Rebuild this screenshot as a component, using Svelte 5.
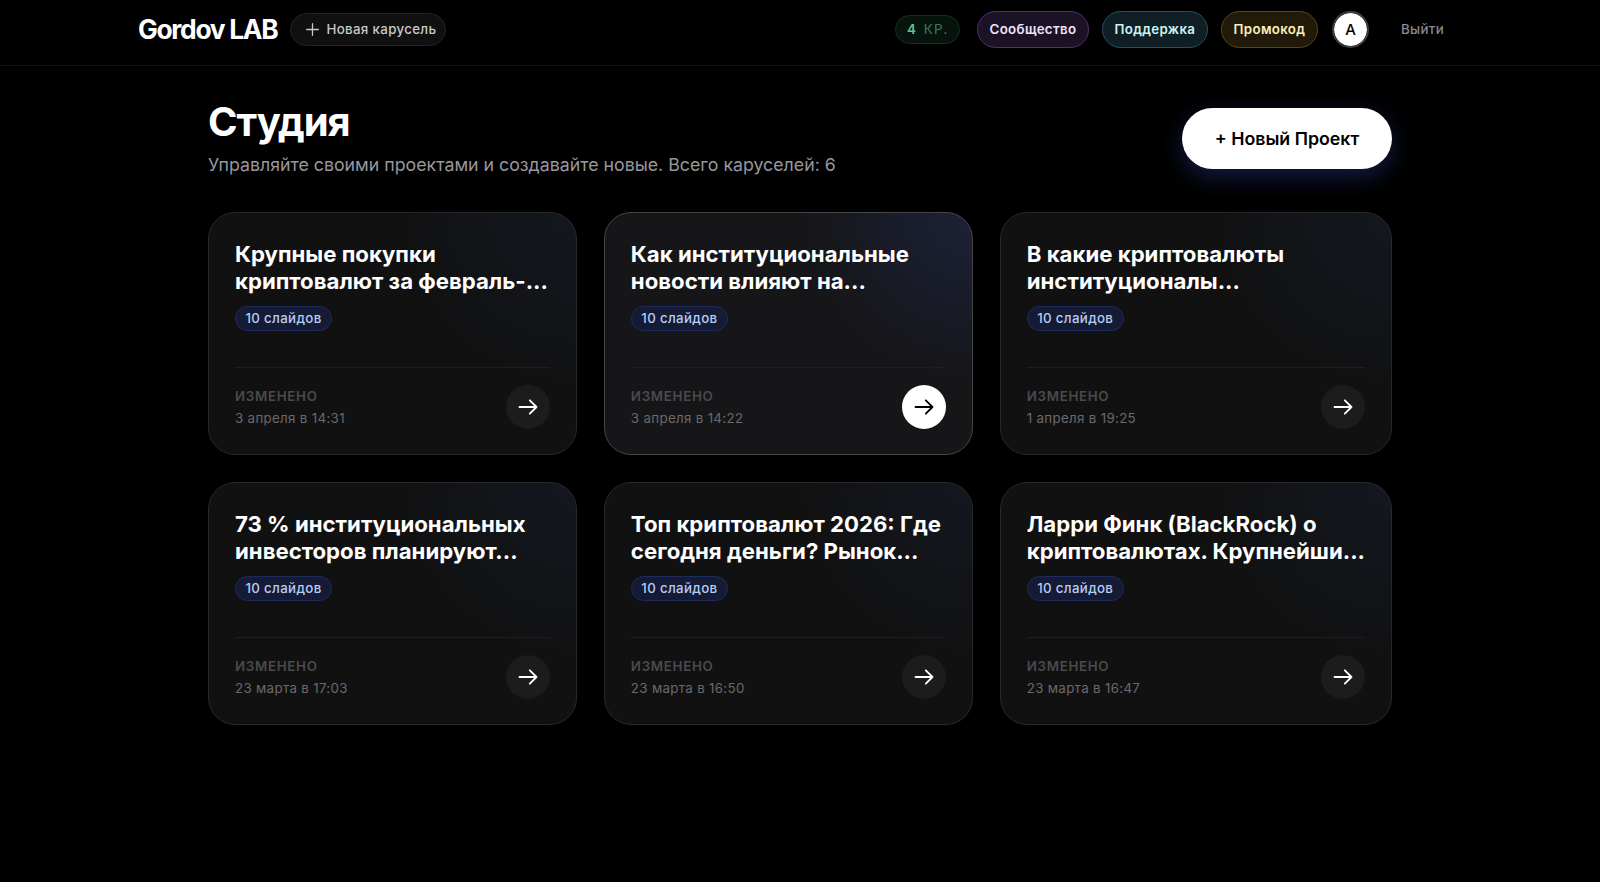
<script>
  const projects = [
    { lines: ['Крупные покупки', 'криптовалют за февраль-...'], date: '3 апреля в 14:31' },
    { lines: ['Как институциональные', 'новости влияют на...'], date: '3 апреля в 14:22', active: true },
    { lines: ['В какие криптовалюты', 'институционалы...'], date: '1 апреля в 19:25' },
    { lines: ['73 % институциональных', 'инвесторов планируют...'], date: '23 марта в 17:03' },
    { lines: ['Топ криптовалют 2026: Где', 'сегодня деньги? Рынок...'], date: '23 марта в 16:50' },
    { lines: ['Ларри Финк (BlackRock) о', 'криптовалютах. Крупнейши...'], date: '23 марта в 16:47' }
  ];
</script>

<div class="page">
  <header>
    <div class="left">
      <span class="logo">Gordov LAB</span>
      <button class="create">
        <svg width="13" height="13" viewBox="0 0 13 13"><path d="M6.5 .7v11.6M.7 6.5h11.6" /></svg>
        <span>Новая карусель</span>
      </button>
    </div>
    <nav>
      <span class="credits"><b>4</b><span>КР.</span></span>
      <button class="pill community">Сообщество</button>
      <button class="pill support">Поддержка</button>
      <button class="pill promo">Промокод</button>
      <span class="avatar">A</span>
      <button class="logout">Выйти</button>
    </nav>
  </header>

  <main>
    <section class="intro">
      <div>
        <h1>Студия</h1>
        <p>Управляйте своими проектами и создавайте новые. Всего каруселей: 6</p>
      </div>
      <button class="new-project">+ Новый Проект</button>
    </section>

    <section class="grid">
      {#each projects as project}
        <article class:active={project.active}>
          <h2>{project.lines[0]}<br />{project.lines[1]}</h2>
          <span class="slides">10 слайдов</span>
          <footer>
            <div class="meta">
              <span class="label">ИЗМЕНЕНО</span>
              <span class="date">{project.date}</span>
            </div>
            <span class="arrow">
              <svg width="20" height="20" viewBox="0 0 20 20"><path d="M1.5 10h17M11.8 3.3l6.7 6.7-6.7 6.7" /></svg>
            </span>
          </footer>
        </article>
      {/each}
    </section>
  </main>
</div>

<style>
  :global(body) {
    background: #000;
    overflow: hidden;
  }
  .page {
    height: 882px;
    background: #000;
    color: #fff;
    font-family: Inter, sans-serif;
    -webkit-font-smoothing: antialiased;
  }
  .page * { box-sizing: border-box; }
  button {
    font: inherit;
    border: 0;
    background: none;
    padding: 0;
    color: inherit;
    white-space: nowrap;
  }
  header {
    height: 66px;
    padding: 0 156px 7px 138px;
    border-bottom: 1px solid #111113;
    display: flex;
    align-items: center;
    justify-content: space-between;
  }
  .left, nav { display: flex; align-items: center; }
  .logo {
    width: 152px;
    font-size: 26.4px;
    font-weight: 700;
    letter-spacing: -1.33px;
    line-height: 32px;
    white-space: nowrap;
  }
  .create {
    width: 156px;
    height: 33px;
    border: 1px solid #242424;
    border-radius: 17px;
    background: #101010;
    display: flex;
    align-items: center;
    padding-left: 15px;
    gap: 7.5px;
    color: #c8c8c8;
    font-size: 13.3px;
    font-weight: 500;
    letter-spacing: .33px;
  }
  .create svg { stroke: #c8c8c8; stroke-width: 1.3; fill: none; stroke-linecap: round; }
  .credits {
    width: 65px;
    height: 29px;
    margin-right: 17px;
    border: 1px solid #15301f;
    border-radius: 15px;
    background: #07140d;
    display: flex;
    align-items: center;
    padding-left: 11px;
    gap: 8px;
    font-size: 13.3px;
    color: #3d7a5d;
  }
  .credits b { color: #63c08f; font-weight: 600; }
  .credits span { letter-spacing: 1.3px; }
  .pill {
    height: 37px;
    border: 1px solid;
    border-radius: 19px;
    font-size: 13.3px;
    font-weight: 600;
    letter-spacing: .33px;
    margin-right: 13px;
    text-align: center;
  }
  .community { width: 112px; background: #1c1226; border-color: #49346b; color: #ece2fb; }
  .support { width: 106px; background: #101e25; border-color: #23545a; color: #cdf3ef; }
  .promo { width: 97px; background: #221a09; border-color: #5a4615; color: #fbeeb8; margin-right: 14px; }
  .avatar {
    width: 37px;
    height: 37px;
    border: 2px solid #3b3b45;
    border-radius: 50%;
    background: #fff;
    background-clip: padding-box;
    color: #000;
    font-size: 15px;
    font-weight: 500;
    display: flex;
    align-items: center;
    justify-content: center;
    margin-right: 32px;
  }
  .logout { font-size: 13.3px; font-weight: 500; letter-spacing: .33px; color: #8a8a8e; }

  main { width: 1184px; margin: 0 auto; }
  .intro {
    height: 146px;
    display: flex;
    justify-content: space-between;
  }
  h1 {
    margin: 32px 0 0;
    font-size: 40px;
    line-height: 48px;
    font-weight: 700;
    letter-spacing: -1px;
  }
  .intro p {
    margin: 6px 0 0;
    font-size: 17.75px;
    line-height: 26px;
    color: #97979d;
    white-space: nowrap;
  }
  .new-project {
    width: 210px;
    height: 61px;
    margin-top: 42px;
    border-radius: 31px;
    background: #fff;
    color: #000;
    font-size: 17.75px;
    font-weight: 600;
    box-shadow: 0 8px 24px rgba(59, 92, 220, .3);
  }
  .grid {
    display: grid;
    grid-template-columns: repeat(3, 1fr);
    column-gap: 26.6px;
    row-gap: 26.6px;
  }
  article {
    height: 243.4px;
    border: 1px solid #28282a;
    border-radius: 27px;
    background: radial-gradient(circle 170px at 100% 0, #13171f 0, #12151a 45%, #111112 100%);
    padding: 27px 26px 25px;
    display: flex;
    flex-direction: column;
    align-items: flex-start;
  }
  article.active {
    border-color: #464648;
    background: radial-gradient(circle 170px at 100% 0, #1c2136 0, #191c2a 45%, #161618 100%);
  }
  h2 {
    margin: 0;
    font-size: 22.2px;
    line-height: 27.4px;
    font-weight: 700;
    white-space: nowrap;
  }
  .slides {
    width: 97px;
    height: 25px;
    margin-top: 11px;
    border: 1px solid #1d2b5c;
    border-radius: 13px;
    background: #151b35;
    color: #b8cdf4;
    font-size: 13.3px;
    line-height: 23px;
    font-weight: 500;
    letter-spacing: .33px;
    text-align: center;
    white-space: nowrap;
  }
  footer {
    width: 100%;
    margin-top: auto;
    border-top: 1px solid #1e1e1f;
    padding-top: 17px;
    display: flex;
    justify-content: space-between;
    align-items: center;
  }
  .meta { display: flex; flex-direction: column; gap: 5px; }
  .label {
    font-size: 13.3px;
    line-height: 17px;
    font-weight: 600;
    letter-spacing: .7px;
    color: #4a4a4e;
  }
  .date {
    font-size: 13.3px;
    line-height: 17px;
    letter-spacing: .33px;
    color: #69696e;
  }
  .arrow {
    width: 44px;
    height: 44px;
    border-radius: 50%;
    background: #1c1c1c;
    color: #fff;
    display: flex;
    align-items: center;
    justify-content: center;
  }
  .arrow svg { fill: none; stroke: currentColor; stroke-width: 1.8; stroke-linecap: round; stroke-linejoin: round; }
  .active .arrow { background: #fff; color: #000; }
</style>
